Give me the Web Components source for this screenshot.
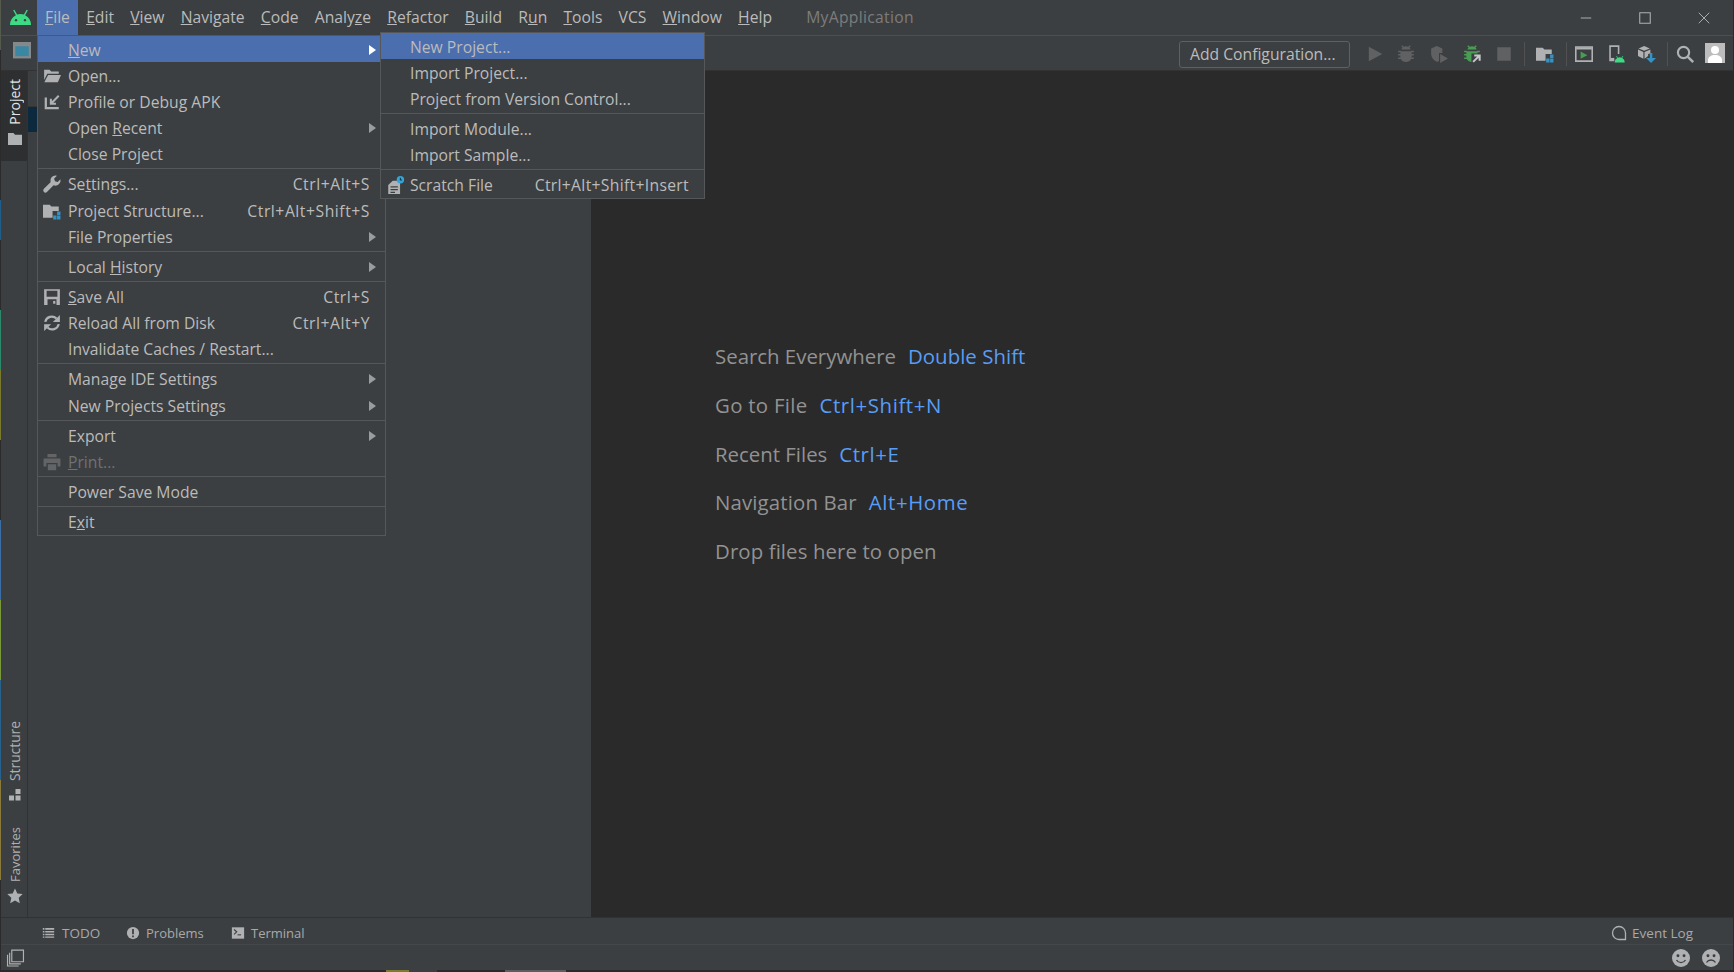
<!DOCTYPE html>
<html lang="en"><head><meta charset="utf-8"><title>MyApplication</title>
<style>
html,body{margin:0;padding:0;background:#2a2a2a;overflow:hidden}
body{font:15.700px "Open Sans","Noto Sans",sans-serif;color:#bbb}
</style></head>
<body>
<ide-app>
  <ide-titlebar slot="top">
    <ide-mi active><u>F</u>ile</ide-mi><ide-mi><u>E</u>dit</ide-mi><ide-mi><u>V</u>iew</ide-mi><ide-mi><u>N</u>avigate</ide-mi><ide-mi><u>C</u>ode</ide-mi><ide-mi>Analy<u>z</u>e</ide-mi><ide-mi><u>R</u>efactor</ide-mi><ide-mi><u>B</u>uild</ide-mi><ide-mi>R<u>u</u>n</ide-mi><ide-mi><u>T</u>ools</ide-mi><ide-mi>VCS</ide-mi><ide-mi><u>W</u>indow</ide-mi><ide-mi><u>H</u>elp</ide-mi>
  </ide-titlebar>
  <ide-toolbar slot="top"></ide-toolbar>
  <ide-stripe slot="stripe"></ide-stripe>
  <ide-project slot="panel"></ide-project>
  <ide-hints slot="editor">
    <ide-hint key="Double Shift">Search Everywhere</ide-hint>
    <ide-hint key="Ctrl+Shift+N" style="letter-spacing:.3px">Go to File</ide-hint>
    <ide-hint key="Ctrl+E">Recent Files</ide-hint>
    <ide-hint key="Alt+Home" style="letter-spacing:.15px">Navigation Bar</ide-hint>
    <ide-hint style="letter-spacing:.1px">Drop files here to open</ide-hint>
  </ide-hints>
  <ide-toolbelt slot="bottom"></ide-toolbelt>
  <ide-status slot="bottom"></ide-status>

  <ide-menu kind="file" slot="over">
    <ide-item sel arrow><u>N</u>ew</ide-item>
    <ide-item icon="open">Open...</ide-item>
    <ide-item icon="apk">Profile or Debug APK</ide-item>
    <ide-item arrow>Open <u>R</u>ecent</ide-item>
    <ide-item>Close Project</ide-item>
    <ide-sep></ide-sep>
    <ide-item icon="wrench" short="Ctrl+Alt+S">Se<u>t</u>tings...</ide-item>
    <ide-item icon="structure" short="Ctrl+Alt+Shift+S">Project Structure...</ide-item>
    <ide-item arrow>File Properties</ide-item>
    <ide-sep></ide-sep>
    <ide-item arrow>Local <u>H</u>istory</ide-item>
    <ide-sep></ide-sep>
    <ide-item icon="save" short="Ctrl+S"><u>S</u>ave All</ide-item>
    <ide-item icon="reload" short="Ctrl+Alt+Y">Reload All from Disk</ide-item>
    <ide-item>Invalidate Caches / Restart...</ide-item>
    <ide-sep></ide-sep>
    <ide-item arrow>Manage IDE Settings</ide-item>
    <ide-item arrow>New Projects Settings</ide-item>
    <ide-sep></ide-sep>
    <ide-item arrow>Export</ide-item>
    <ide-item icon="print" disabled><u>P</u>rint...</ide-item>
    <ide-sep></ide-sep>
    <ide-item>Power Save Mode</ide-item>
    <ide-sep></ide-sep>
    <ide-item>E<u>x</u>it</ide-item>
  </ide-menu>
  <ide-menu kind="sub" slot="over">
    <ide-item sub sel>New Project...</ide-item>
    <ide-item sub>Import Project...</ide-item>
    <ide-item sub>Project from Version Control...</ide-item>
    <ide-sep></ide-sep>
    <ide-item sub>Import Module...</ide-item>
    <ide-item sub>Import Sample...</ide-item>
    <ide-sep></ide-sep>
    <ide-item sub icon="scratch" short="Ctrl+Alt+Shift+Insert">Scratch File</ide-item>
  </ide-menu>
</ide-app>
<script>
const G='#afb1b3',D='#5f6163',B='#3592c4',GR='#499c54',AG='#3ddc84';
const FONT='"Open Sans","Noto Sans",sans-serif';
const bugShape=c=>`<path fill="${c}" d="M5 2.2 3.800 1l.8-.8L6 1.600a4 4 0 0 1 4 0L11.400.2l.8.8L11 2.200c.6.5 1 1.200 1.100 1.800H3.900C4 3.400 4.400 2.700 5 2.200zM1 5h2.200l.6.6h8.400l.6-.6H15v1.400h-2V8h2v1.400h-2V11h2v1.400h-2.400C11.800 14 10.100 15 8 15s-3.800-1-4.600-2.600H1V11h2V9.400H1V8h2V6.400H1z"/>`;
const ICONS={
 open:`<path fill="${G}" d="M1 3.500V2.500h4.800L7.300 4H14v2H3.800L1 11.500z"/><path fill="${G}" d="M4.500 7H16l-2.800 6.500H1.200z"/>`,
 apk:`<path fill="none" stroke="${G}" stroke-width="2" d="M2.500 4v9.500H14"/><path fill="none" stroke="${G}" stroke-width="1.800" d="M14 2.500 7 9.500M7 5v4.500h4.500"/>`,
 wrench:`<path fill="${G}" d="M15.500 3.700 13 6.200l-2.400-.7-.7-2.400L12.400.6A4.600 4.600 0 0 0 6.700 6.400L.8 12.300a1.900 1.900 0 0 0 2.700 2.700l5.900-5.900a4.600 4.600 0 0 0 6.100-5.400z"/>`,
 structure:`<path fill="${G}" d="M0 2.500h6L7.500 4H14v4H8.500v6H0z"/><path fill="${B}" d="M12.500 8.500h3v3h-3zM9 12h3v3.500H9zM12.500 12h3v3.500h-3z"/>`,
 save:`<path fill="${G}" fill-rule="evenodd" d="M1 1h14v14H1zM3.200 2.500v5.200h9.600V2.500zM4 10v5h8v-5z"/><path fill="${G}" d="M9 11.500h2V14H9z"/>`,
 reload:`<path fill="none" stroke="${G}" stroke-width="2" d="M2 7a6 6 0 0 1 10-3M14 9a6 6 0 0 1-10 3"/><path fill="${G}" d="M15 .8v6.200H8.800zM1 15.200V9h6.200z"/>`,
 print:`<path fill="#626466" d="M4 .8h8v3H4zM.5 4.800h15V12H13V8.800H3V12H.5zM4.300 10h7.400v5.300H4.300z"/>`,
 scratch:`<path fill="${G}" fill-rule="evenodd" d="M6 4.200h6.500V16H2V8zM4 9v1.200h6.500V9zM4 11.500v1.200h6.500v-1.200zM4 14v1h4v-1z"/><circle cx="12.800" cy="3.300" r="3.300" fill="#33a5d8"/><path stroke="#1b3a4a" fill="none" d="M12.800 1.500v2h1.500"/>`,
 monitor:`<rect x="1" y="1" width="14" height="12.600" fill="#3a87a3" stroke="#85898b" stroke-width="2"/><path fill="#85898b" d="M1 1h14v2.800H1z"/>`,
 run:`<path fill="${D}" d="M2.500 1.500 14.500 8l-12 6.500z"/>`,
 bug:bugShape(D),
 coverage:`<path fill="${D}" d="M1 3 6 .8l5 2.200v4H8v7.200L6.500 15C3 13.500 1 11 1 7z"/><path fill="${D}" d="M9 8l7 4-7 4z"/>`,
 attach:bugShape(GR)+`<path fill="#3c3f41" d="M7.500 7.500h8.500V16H7.500z"/><path fill="none" stroke="#c5c7c9" stroke-width="1.800" d="M9 15 14.500 9.500M10 9.300h4.800V14"/>`,
 stop:`<path fill="${D}" d="M2 2h12v12H2z"/>`,
 avd:`<path fill="none" stroke="${G}" stroke-width="1.400" d="M.7 1.700h14.600v12.600H.7z"/><path fill="${G}" d="M1 2h14v2H1z"/><path fill="#499c54" d="M5 5.700 11 9l-6 3.300z"/>`,
 device:`<path fill="none" stroke="${G}" stroke-width="1.400" d="M2.700 1h7.600v12.800H2.700z"/><path fill="${G}" d="M3 11.500h7v2H3z"/><path fill="#3c3f41" d="M6.500 8h9.500v8H6.500z"/><path fill="${AG}" d="M6.800 15.500a4.500 4.500 0 0 1 2.300-3.900l-1-1.600.6-.3 1 1.600a4.500 4.500 0 0 1 3.200 0l1-1.600.6.300-1 1.600a4.500 4.500 0 0 1 2.300 3.900z"/>`,
 sdk:`<path fill="${G}" d="M5.500 .8 10.500 3 5.500 5.200.5 3z"/><path fill="${G}" d="M0 4v5.800l4.800 2.400V6.200zM11 4v3.500L9 8v1.800l-3.200 2.400V6.200z"/><path fill="${B}" d="M10.500 7h2.200v4.500H16L11.600 16 7.200 11.500h3.300z"/>`,
 search:`<circle cx="6.700" cy="6.700" r="5" fill="none" stroke="${G}" stroke-width="1.900"/><path stroke="${G}" stroke-width="2.200" d="m10.300 10.300 5 5"/>`,
 folder:`<path fill="${G}" d="M1 2h5.500L8 3.800h7V14H1z"/>`,
 struct2:`<path fill="${G}" d="M8.500 2h5v5h-5zM2 8.500h5v5H2zM8.500 8.500h5v5h-5z"/>`,
 star:`<path fill="${G}" d="m8 .5 2.300 5 5.400.6-4 3.700 1.100 5.400L8 12.500 3.200 15.200l1.100-5.400-4-3.700 5.400-.6z"/>`,
 list:`<path fill="${G}" d="M1 2.500h2v2H1zM4 2.500h11v2H4zM1 6h2v2H1zM4 6h11v2H4zM1 9.500h2v2H1zM4 9.500h11v2H4zM1 13h2v1.500H1zM4 13h11v1.500H4z"/>`,
 problem:`<circle cx="8" cy="8" r="7" fill="${G}"/><path fill="#3c3f41" d="M7 3.500h2v6H7zM7 10.800h2v2H7z"/>`,
 terminal:`<path fill="${G}" d="M1 1.500h14v13H1z"/><path fill="none" stroke="#3c3f41" stroke-width="1.300" d="m3.500 4 3 2.700-3 2.800"/><path fill="#3c3f41" d="M7.500 9.500h4v1.200h-4z"/>`,
 bubble:`<path fill="none" stroke="${G}" stroke-width="1.300" d="M8 1.500a6.500 6.500 0 1 0 0 13h6.500V8A6.500 6.500 0 0 0 8 1.500z"/>`,
 happy:`<circle cx="8" cy="8" r="8" fill="${G}"/><circle cx="5.300" cy="6" r="1.300" fill="#3c3f41"/><circle cx="10.700" cy="6" r="1.300" fill="#3c3f41"/><path fill="none" stroke="#3c3f41" stroke-width="1.200" d="M4 9.800c1.800 3 6.200 3 8 0"/>`,
 sad:`<circle cx="8" cy="8" r="8" fill="${G}"/><circle cx="5.300" cy="6" r="1.300" fill="#3c3f41"/><circle cx="10.700" cy="6" r="1.300" fill="#3c3f41"/><path fill="none" stroke="#3c3f41" stroke-width="1.200" d="M4 12c1.800-3 6.200-3 8 0"/>`,
 frame:`<path fill="none" stroke="${G}" stroke-width="1.100" d="M4.500 1h11v11h-11zM2.500 3.500V14h10.500M.5 5.500V16h10.500"/>`,
 minimize:`<path stroke="#afb1b3" stroke-width="1.100" d="M2 8h12"/>`,
 maximize:`<path fill="none" stroke="#afb1b3" stroke-width="1.200" d="M2 2h12v12H2z"/>`,
 close:`<path stroke="#afb1b3" stroke-width="1.100" d="m2 2 12 12M14 2 2 14"/>`,
 android:`<path fill="${AG}" d="M0 13.500a8.400 8.400 0 0 1 4.500-7.500L2.400 2.300l.9-.5 2.100 3.700a10 10 0 0 1 5.200 0l2.100-3.700.9.500-2.100 3.700a8.400 8.400 0 0 1 4.500 7.500z"/><circle cx="4.600" cy="9.800" r=".9" fill="#3c3f41"/><circle cx="11.400" cy="9.800" r=".9" fill="#3c3f41"/>`
};
function def(name,css,html){
  customElements.define(name,class extends HTMLElement{
    constructor(){super();const r=this.attachShadow({mode:'open'});
      r.innerHTML=`<style>${css}</style>${typeof html==='function'?'':html}`;}
    connectedCallback(){if(typeof html==='function'&&!this._d){this._d=1;
      const t=document.createElement('template');t.innerHTML=html(this);this.shadowRoot.append(t.content);}}
  });
}
def('ide-icon',`:host{display:inline-flex;flex:none;width:var(--s,18px);height:var(--s,18px)}svg{width:100%;height:100%;display:block;overflow:visible}`,
  el=>`<svg viewBox="0 0 16 16" aria-hidden="true">${ICONS[el.getAttribute('name')]||''}</svg>`);
const ic=(n,s,st)=>`<ide-icon name="${n}" style="${s?`--s:${s}px;`:''}${st||''}"></ide-icon>`;

def('ide-app',`:host{display:flex;flex-direction:column;position:relative;width:1734px;height:972px;overflow:hidden;background:#3c3f41;font:15.700px ${FONT};color:#bbb}
 .main{display:flex;height:846px}
 .editor{flex:1;background:#2a2a2a;display:block}
 .edgeL,.edgeR{position:absolute;top:0;width:1px;height:970px}
 .edgeL{left:0;background:linear-gradient(#545a4c 0 50px,#2b2b2b 50px 200px,#1f5d8c 200px 240px,#2b2b2b 240px 310px,#2a8a6a 310px 370px,#7a7a2a 370px 440px,#2b2b2b 440px 520px,#3a6ea5 520px 600px,#7a9a3a 600px 680px,#27628e 680px 780px,#8b7a3a 780px 880px,#2b2b2b 880px)}
 .edgeR{right:0;background:#2a2a2a}
 .floor{height:2px;background:linear-gradient(90deg,#2a2a2a 0 386px,#7c7c2e 386px 409px,#3c3f41 409px 437px,#2a2a2a 437px 505px,#5e5e5e 505px 566px,#2a2a2a 566px)}`,
 `<slot name="top"></slot><div class="main"><slot name="stripe"></slot><slot name="panel"></slot><div class="editor"><slot name="editor"></slot></div></div><slot name="bottom"></slot><div class="floor"></div><div class="edgeL"></div><div class="edgeR"></div><slot name="over"></slot>`);

def('ide-titlebar',`:host{display:flex;box-sizing:border-box;height:36px;padding:0 1px;background:#3c3f41;border-bottom:1px solid #4d5052;align-items:stretch}
 .logo{width:36px;display:flex;align-items:center;justify-content:center;padding-left:2px;box-sizing:border-box}
 .logo svg{width:21px;height:17px}
 .name{margin-left:26px;align-self:center;color:#7c7c7c;letter-spacing:.3px;padding-bottom:1px}
 .win{margin-left:auto;display:flex}
 .win span{width:59px;display:flex;align-items:center;justify-content:center;margin-top:1px}`,
 `<div class="logo"><svg viewBox="0 1.500 16 12.500">${ICONS.android}</svg></div><slot></slot><div class="name">MyApplication</div><div class="win"><span>${ic('minimize',14)}</span><span>${ic('maximize',14)}</span><span>${ic('close',14)}</span></div>`);

def('ide-mi',`:host{display:flex;align-items:center;box-sizing:border-box;padding:0 8.100px 1px;height:35px;color:#bbb;white-space:nowrap}
 :host([active]){background:#4b6eaf}`,`<slot></slot>`);

def('ide-toolbar',`:host{display:flex;box-sizing:border-box;height:35px;background:#3c3f41;border-bottom:1px solid #323232;align-items:center;padding:2px 9px 0 1px}
 .lead{margin:0 0 2px 12px}
 button{all:unset;box-sizing:border-box;margin-left:auto;margin-right:16px;width:171px;height:27px;border:1px solid #5e6163;border-radius:3px;padding-left:10px;font:15.700px ${FONT};color:#bbb;display:flex;align-items:center;white-space:nowrap}
 .sep{flex:none;width:1px;height:24px;background:#515151}
 svg{display:block;flex:none}`,
 `<div class="lead">${ic('monitor',18)}</div><button>Add Configuration...</button>
 ${ic('run')}${ic('bug',18,'margin-left:13px')}${ic('coverage',18,'margin-left:15px')}${ic('attach',18,'margin-left:15px')}${ic('stop',18,'margin-left:14px')}
 <div class="sep" style="margin-left:11px"></div>${ic('structure',18,'margin-left:11px')}<div class="sep" style="margin-left:12px"></div>
 ${ic('avd',18,'margin-left:8px')}${ic('device',18,'margin-left:14px')}${ic('sdk',18,'margin-left:13px')}
 <div class="sep" style="margin-left:11px"></div>${ic('search',18,'margin-left:8px')}
 <svg width="20" height="20" viewBox="0 0 20 20" style="margin:0 0 2px 11px"><rect width="20" height="20" fill="#bdbdbd"/><circle cx="10" cy="7" r="4" fill="#fff"/><path fill="#fff" d="M3 20v-3c0-3 3-5 7-5s7 2 7 5v3z"/></svg>`);

def('ide-stripe',`:host{display:flex;flex-direction:column;box-sizing:border-box;margin-left:1px;width:27px;border-right:1px solid #323232;height:846px;flex:none}
 .tab{display:flex;flex-direction:column;align-items:center;width:100%;font-size:13.500px;color:#b0b0b0;box-sizing:border-box;padding-left:2px}
 .tab span{writing-mode:vertical-rl;transform:rotate(180deg);white-space:nowrap;line-height:22px}
 .on{background:#2d2f30;color:#e4e4e4;height:90px;padding-top:8px}
 .sp{flex:1}
 .tab ide-icon{margin-top:6px}`,
 `<div class="tab on" style="font-size:14px"><span>Project</span>${ic('folder',16)}</div><div class="sp"></div>
  <div class="tab" style="margin-bottom:24px;font-size:13.800px"><span>Structure</span>${ic('struct2',16)}</div>
  <div class="tab" style="margin-bottom:13px;font-size:13px"><span>Favorites</span>${ic('star',16)}</div>`);

def('ide-project',`:host{display:block;width:563px;flex:none;background:#3c3f41}
 .head{height:36px;box-sizing:border-box;border-bottom:1px solid #333537}
 .row{height:25px;background:#0d293e}`,`<div class="head"></div><div class="row"></div>`);

def('ide-hints',`:host{display:block;padding:261px 0 0 124px}`,`<slot></slot>`);
def('ide-hint',`:host{display:flex;align-items:center;height:48.700px;font-size:20.400px;color:#929292;white-space:nowrap;gap:12px}
 .k{color:#589df6;letter-spacing:.05px}
 .p{letter-spacing:.6px}`,el=>{const k=el.getAttribute('key');return `<slot></slot>${k?`<span class="k${k.includes('+')?' p':''}">${k}</span>`:''}`;});

def('ide-toolbelt',`:host{display:flex;align-items:center;box-sizing:border-box;height:28px;padding:3px 41px 0 42px;border-top:1px solid #323232;border-bottom:1px solid #45484a;font-size:13px;color:#a9a9a9;white-space:nowrap}
 .b{display:flex;align-items:center;gap:6px}
 .r{margin-left:auto;font-size:13.500px}`,
 `<div class="b" style="width:84px;gap:7px;font-size:13.500px">${ic('list',13)}TODO</div><div class="b" style="width:105px">${ic('problem',14)}Problems</div><div class="b">${ic('terminal',14)}Terminal</div><div class="b r" style="gap:5px">${ic('bubble',16)}Event Log</div>`);

def('ide-status',`:host{display:flex;align-items:center;box-sizing:border-box;height:25px;padding:0 14px 0 7px}
 .r{margin-left:auto;display:flex;gap:12px}`,
 `${ic('frame',17)}<div class="r">${ic('happy')}${ic('sad')}</div>`);

def('ide-menu',`:host{display:block;position:absolute;box-sizing:border-box;background:#3c3f41;border:1px solid #555759}
 :host([kind=file]){left:37px;top:35px;width:349px;z-index:2}
 :host([kind=sub]){left:380px;top:32px;width:325px;z-index:3}`,`<slot></slot>`);
def('ide-sep',`:host{display:flex;align-items:center;height:3.900px;margin:0 -1px}
 div{flex:1;height:1px;background:#555759}`,`<div></div>`);
def('ide-item',`:host{display:flex;align-items:center;box-sizing:border-box;height:26.200px;padding:1px 9px 0 0;color:#bbb;white-space:nowrap}
 :host([sel]){background:#4b6eaf}
 :host([disabled]){color:#6f7173}
 .i{flex:none;width:30px;display:flex;justify-content:center;padding-right:3px;box-sizing:border-box}
 :host([sub]) .i{width:29px;padding-right:2px}
 .s{margin-left:auto;margin-right:6px;letter-spacing:.55px}
 :host([sub]) .s{letter-spacing:.32px}
 .a{flex:none;width:0;height:0;border-left:7px solid #9a9c9e;border-top:5px solid transparent;border-bottom:5px solid transparent;margin-left:auto}
 :host([sel]) .a{border-left-color:#fff}`,
 el=>{const i=el.getAttribute('icon'),s=el.getAttribute('short');
  return `<span class="i">${i?ic(i):''}</span><span><slot></slot></span>${s?`<span class="s">${s}</span>`:''}${el.hasAttribute('arrow')?'<span class="a"></span>':''}`;});
</script>
</body></html>
